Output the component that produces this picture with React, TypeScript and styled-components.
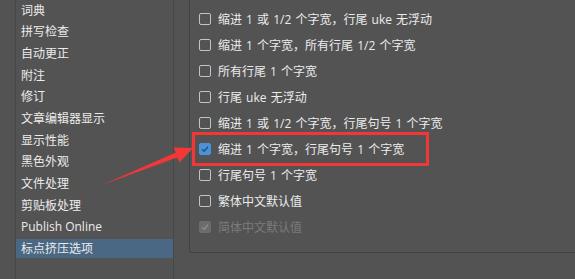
import React from "react";
import styled, { createGlobalStyle } from "styled-components";

const Global = createGlobalStyle`
  html, body { margin: 0; padding: 0; background: #535353; overflow: hidden; }
  body { font-family: "Open Sans", "Noto Sans CJK SC", "Noto Sans", sans-serif; }
`;

const Page = styled.div`
  position: relative;
  width: 575px;
  height: 279px;
  overflow: hidden;
  display: flex;
  align-items: flex-start;
  background: #535353;
`;

const Sidebar = styled.ul`
  list-style: none;
  margin: 0 0 0 15px;
  padding: 0.5px 0 0 0;
  width: 157px;
  height: 279px;
  border-left: 1px solid #474747;
  border-right: 1px solid #474747;
  display: flex;
  flex-direction: column;
  gap: 2.7px;
  box-sizing: content-box;
`;

const NavItem = styled.li<{ $selected?: boolean }>`
  height: 19px;
  line-height: 19px;
  padding-left: 5px;
  font-size: 12px;
  color: #ececec;
  background: ${(p) => (p.$selected ? "#4a6783" : "transparent")};
  white-space: nowrap;
`;

const Group = styled.div`
  margin-left: 15px;
  margin-top: -20px;
  padding: 25px 0 12px 9px;
  flex: 1;
  border: 1px solid #434343;
  border-right: none;
  border-radius: 0 0 0 3px;
  display: flex;
  flex-direction: column;
`;

const Row = styled.label<{ $disabled?: boolean }>`
  height: 26px;
  display: flex;
  align-items: center;
  gap: 7px;
  font-size: 12px;
  word-spacing: 1px;
  color: ${(p) => (p.$disabled ? "#7b7b7b" : "#ececec")};
  white-space: nowrap;
`;

const Box = styled.span<{ $checked?: boolean; $disabled?: boolean }>`
  width: 12px;
  height: 12px;
  box-sizing: border-box;
  border-radius: 2px;
  flex: none;
  display: flex;
  align-items: center;
  justify-content: center;
  border: 1px solid
    ${(p) => (p.$disabled ? "#6c6c6c" : p.$checked ? "#4b92dd" : "#c4c4c4")};
  background: ${(p) => (p.$disabled ? "#6c6c6c" : p.$checked ? "#4b92dd" : "transparent")};
`;

const Highlight = styled.div`
  position: absolute;
  left: 192px;
  top: 132px;
  width: 237px;
  height: 34px;
  box-sizing: border-box;
  border: 3.5px solid #f23737;
  pointer-events: none;
`;

const ArrowLayer = styled.svg`
  position: absolute;
  left: 0;
  top: 0;
  pointer-events: none;
`;

const Check = ({ color }: { color: string }) => (
  <svg width="10" height="10" viewBox="0 0 10 10">
    <path d="M2 5.2 L4.1 7.2 L8 2.8" fill="none" stroke={color} strokeWidth="1.4" />
  </svg>
);

const nav = [
  "词典",
  "拼写检查",
  "自动更正",
  "附注",
  "修订",
  "文章编辑器显示",
  "显示性能",
  "黑色外观",
  "文件处理",
  "剪贴板处理",
  "Publish Online",
  "标点挤压选项",
];

type Opt = { label: string; checked?: boolean; disabled?: boolean };
const options: Opt[] = [
  { label: "缩进 1 或 1/2 个字宽，行尾 uke 无浮动" },
  { label: "缩进 1 个字宽，所有行尾 1/2 个字宽" },
  { label: "所有行尾 1 个字宽" },
  { label: "行尾 uke 无浮动" },
  { label: "缩进 1 或 1/2 个字宽，行尾句号 1 个字宽" },
  { label: "缩进 1 个字宽，行尾句号 1 个字宽", checked: true },
  { label: "行尾句号 1 个字宽" },
  { label: "繁体中文默认值" },
  { label: "简体中文默认值", checked: true, disabled: true },
];

export default function App() {
  return (
    <>
      <Global />
      <Page>
        <Sidebar>
          {nav.map((n, i) => (
            <NavItem key={n} $selected={i === nav.length - 1}>
              {n}
            </NavItem>
          ))}
        </Sidebar>
        <Group>
          {options.map((o) => (
            <Row key={o.label} $disabled={o.disabled}>
              <Box $checked={o.checked} $disabled={o.disabled}>
                {o.checked && <Check color={o.disabled ? "#8e8e8e" : "#2f4d6e"} />}
              </Box>
              {o.label}
            </Row>
          ))}
        </Group>
        <Highlight />
        <ArrowLayer width="575" height="279" viewBox="0 0 575 279">
          <polygon
            points="102,185 177,157.5 179.5,162.5 193,148 173.5,147.5 175.8,152.5"
            fill="#f23737"
          />
        </ArrowLayer>
      </Page>
    </>
  );
}
